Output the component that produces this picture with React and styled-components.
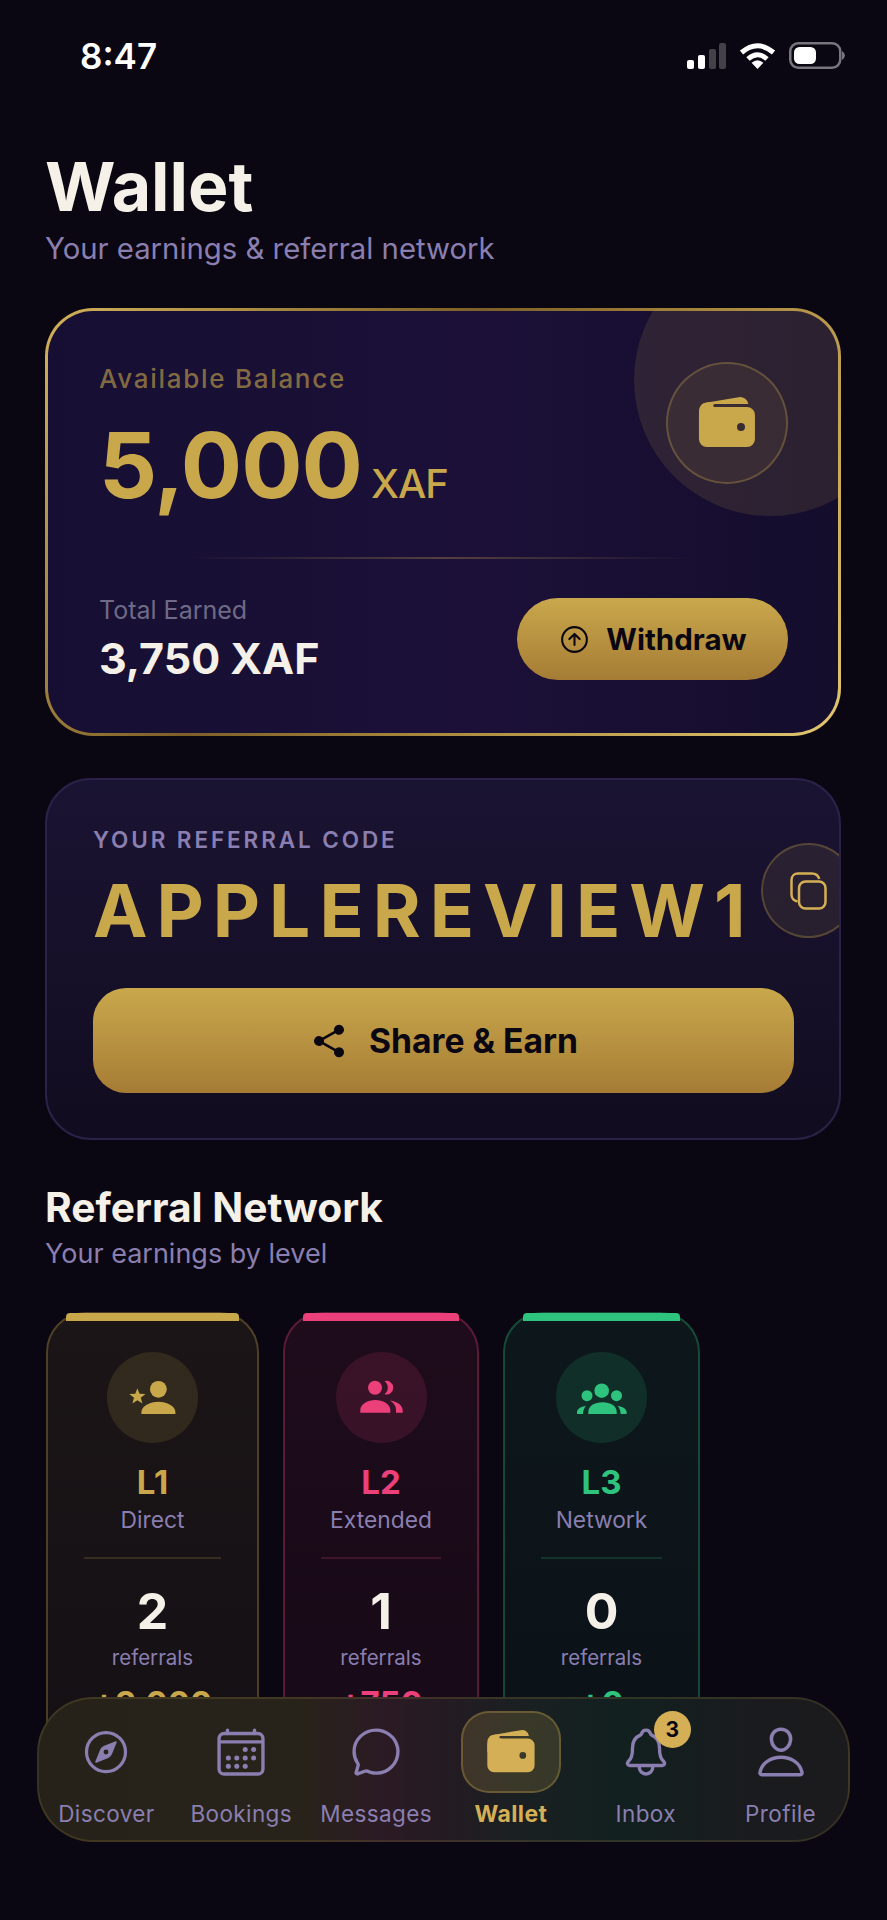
import React from "react";
import styled, { createGlobalStyle } from "styled-components";
import {
  IoCompassOutline,
  IoCalendarOutline,
  IoChatbubbleOutline,
  IoWallet,
  IoNotificationsOutline,
  IoPersonOutline,
  IoShareSocial,
  IoArrowUpCircleOutline,
} from "react-icons/io5";

const GOLD = "#c9a84c";
const MUTED = "#8a7fb0";

const Global = createGlobalStyle`
  * { box-sizing: border-box; }
  html, body { margin: 0; padding: 0; background: #0a0712; }
  body { font-family: Inter, "Noto Sans", sans-serif; }
`;

const Screen = styled.div`
  position: relative;
  width: 887px;
  height: 1920px;
  overflow: hidden;
  background: #0a0712;
`;

const Scroll = styled.div`
  height: 1800px;
  overflow: hidden;
`;

const StatusBar = styled.div`
  display: flex;
  justify-content: space-between;
  align-items: flex-start;
  height: 145px;
  padding: 36px 42px 0 80px;
`;

const Clock = styled.span`
  font-size: 35px;
  line-height: 40px;
  font-weight: 600;
  color: #fff;
`;

const StatusIcons = styled.div`
  display: flex;
  align-items: center;
  gap: 13px;
  padding-top: 6px;
`;

const Content = styled.main`
  padding: 0 46px 0 45px;
`;

const Title = styled.h1`
  margin: 0;
  font-size: 68px;
  line-height: 82px;
  font-weight: 700;
  color: #f5f0e8;
`;

const Subtitle = styled.p`
  margin: 4px 0 0;
  font-size: 29.3px;
  line-height: 36px;
  font-weight: 400;
  color: ${MUTED};
`;

const BalanceCard = styled.section`
  position: relative;
  margin-top: 41px;
  height: 428px;
  padding: 51px 50px 53px 51px;
  border: 3px solid transparent;
  border-radius: 48px;
  background:
    linear-gradient(90deg, #160f33, #1c1038 55%, #140d2c) padding-box,
    linear-gradient(125deg, #d2b25a 0%, #7d5f28 40%, #a5853c 60%, #e2c671 100%) border-box;
  overflow: hidden;
`;

const Glow = styled.div`
  position: absolute;
  top: -67px;
  right: -68px;
  width: 272px;
  height: 272px;
  border-radius: 50%;
  background: rgba(201, 168, 76, 0.13);
`;

const BalanceTop = styled.div`
  position: relative;
  display: flex;
  justify-content: space-between;
  align-items: flex-start;
  height: 153px;
`;

const BalanceLabel = styled.div`
  padding-top: 1px;
  font-size: 26px;
  line-height: 32px;
  font-weight: 500;
  letter-spacing: 1.7px;
  color: rgba(201, 168, 76, 0.62);
`;

const Amount = styled.div`
  display: flex;
  align-items: baseline;
  gap: 9px;
  margin-top: 20px;
`;

const AmountValue = styled.span`
  font-size: 91px;
  line-height: 100px;
  font-weight: 700;
  letter-spacing: -1px;
  color: ${GOLD};
`;

const AmountUnit = styled.span`
  font-size: 40px;
  font-weight: 500;
  letter-spacing: -1px;
  color: ${GOLD};
`;

const WalletBadge = styled.div`
  display: flex;
  align-items: center;
  justify-content: center;
  width: 122px;
  height: 122px;
  border-radius: 50%;
  border: 2px solid rgba(201, 168, 76, 0.3);
  background: rgba(201, 168, 76, 0.08);
  color: ${GOLD};
`;

const FadeLine = styled.div`
  height: 2px;
  margin: 42px 0 39px;
  background: linear-gradient(90deg, transparent 13%, rgba(201, 168, 76, 0.32) 50%, transparent 87%);
`;

const BalanceBottom = styled.div`
  display: flex;
  justify-content: space-between;
  align-items: center;
  height: 82px;
`;

const EarnedLabel = styled.div`
  font-size: 25px;
  line-height: 30px;
  color: #6f6a85;
`;

const EarnedValue = styled.div`
  margin-top: 7px;
  font-size: 43px;
  line-height: 52px;
  font-weight: 700;
  color: #f5f0e8;
`;

const GoldButton = styled.button`
  display: flex;
  align-items: center;
  justify-content: center;
  border: 0;
  font-family: inherit;
  font-weight: 700;
  color: #0a0712;
  background: linear-gradient(180deg, #c9a84c, #a67c35);
`;

const WithdrawButton = styled(GoldButton)`
  width: 271px;
  height: 82px;
  gap: 15px;
  border-radius: 41px;
  font-size: 29.5px;
`;

const ReferralCard = styled.section`
  margin-top: 42px;
  height: 362px;
  padding: 46px 46px 45px;
  border: 2px solid #2a2248;
  border-radius: 46px;
  background: linear-gradient(180deg, #1a1433, #120c20);
  overflow: hidden;
`;

const CodeRow = styled.div`
  display: flex;
  align-items: center;
  gap: 6px;
`;

const CodeColumn = styled.div`
  flex-shrink: 0;
`;

const CodeLabel = styled.div`
  font-size: 22.5px;
  line-height: 28px;
  font-weight: 600;
  letter-spacing: 2.9px;
  color: ${MUTED};
`;

const Code = styled.div`
  margin-top: 13px;
  font-size: 73px;
  line-height: 88px;
  font-weight: 700;
  letter-spacing: 9px;
  white-space: nowrap;
  color: ${GOLD};
`;

const CopyButton = styled.button`
  display: flex;
  align-items: center;
  justify-content: center;
  flex-shrink: 0;
  width: 95px;
  height: 95px;
  padding: 0;
  border-radius: 50%;
  border: 2px solid rgba(201, 168, 76, 0.28);
  background: rgba(201, 168, 76, 0.1);
  color: #d4af55;
`;

const ShareButton = styled(GoldButton)`
  width: 701px;
  height: 105px;
  margin-top: 33px;
  gap: 20px;
  border-radius: 33px;
  font-size: 33.7px;
`;

const SectionTitle = styled.h2`
  margin: 44px 0 0;
  font-size: 40.7px;
  line-height: 48px;
  font-weight: 700;
  color: #f5f0e8;
`;

const SectionSub = styled.p`
  margin: 5px 0 0;
  font-size: 27px;
  line-height: 34px;
  color: ${MUTED};
`;

const LevelRow = styled.div`
  display: flex;
  gap: 24px;
  margin: 41px 0 0 1px;
`;

const LevelCard = styled.article`
  position: relative;
  display: flex;
  flex-direction: column;
  align-items: center;
  flex-shrink: 0;
  width: ${(p) => p.$width}px;
  height: 560px;
  padding: 38px 36px 0;
  border: 2px solid rgba(${(p) => p.$rgb}, 0.3);
  border-radius: 40px;
  background: linear-gradient(180deg, rgba(${(p) => p.$rgb}, 0.09), rgba(${(p) => p.$rgb}, 0.05));
`;

const TopBar = styled.div`
  position: absolute;
  top: -1px;
  left: 18px;
  right: 18px;
  height: 8px;
  border-radius: 4px 4px 0 0;
  background: rgb(${(p) => p.$rgb});
`;

const LevelIcon = styled.div`
  width: 91px;
  height: 91px;
  border-radius: 50%;
  background: rgba(${(p) => p.$rgb}, 0.14);
  color: rgb(${(p) => p.$rgb});
  line-height: 0;
`;

const LevelName = styled.div`
  margin-top: 19px;
  font-size: 33px;
  line-height: 40px;
  font-weight: 700;
  color: rgb(${(p) => p.$rgb});
`;

const LevelKind = styled.div`
  margin-top: 3px;
  font-size: 22.8px;
  line-height: 30px;
  color: ${MUTED};
`;

const LevelLine = styled.div`
  align-self: stretch;
  height: 2px;
  margin-top: 22px;
  background: rgba(${(p) => p.$rgb}, 0.18);
`;

const LevelCount = styled.div`
  margin-top: 22px;
  font-size: 50px;
  line-height: 60px;
  font-weight: 700;
  color: #f5f0e8;
`;

const LevelUnit = styled.div`
  margin-top: 4px;
  font-size: 20.5px;
  line-height: 26px;
  color: ${MUTED};
`;

const LevelEarned = styled.div`
  margin-top: 12px;
  font-size: 33px;
  line-height: 40px;
  font-weight: 700;
  white-space: nowrap;
  color: rgb(${(p) => p.$rgb});
`;

const TabBar = styled.nav`
  position: absolute;
  left: 37px;
  right: 37px;
  bottom: 78px;
  height: 145px;
  display: flex;
  padding-top: 12px;
  border: 2px solid rgba(201, 168, 76, 0.16);
  border-radius: 56px;
  background: linear-gradient(
    90deg,
    #26221a 0%,
    #28231a 32%,
    #2b1a24 43%,
    #241b22 50%,
    #1a2022 60%,
    #122020 72%,
    #1a1b1e 88%,
    #1b1b1d 100%
  );
`;

const Tab = styled.div`
  flex: 1;
  display: flex;
  flex-direction: column;
  align-items: center;
  color: ${(p) => (p.$active ? "#d4af55" : MUTED)};
`;

const TabIcon = styled.div`
  position: relative;
  display: flex;
  align-items: center;
  justify-content: center;
  width: 100px;
  height: 82px;
  border-radius: 28px;
  border: 2px solid ${(p) => (p.$active ? "rgba(201,168,76,0.32)" : "transparent")};
  background: ${(p) => (p.$active ? "rgba(201,168,76,0.18)" : "transparent")};
`;

const TabLabel = styled.span`
  margin-top: 7px;
  font-size: ${(p) => (p.$active ? 23 : 22.5)}px;
  line-height: 28px;
  letter-spacing: 0.4px;
  font-weight: ${(p) => (p.$active ? 700 : 400)};
`;

const Badge = styled.span`
  position: absolute;
  top: -2px;
  right: 3px;
  display: flex;
  align-items: center;
  justify-content: center;
  width: 37px;
  height: 37px;
  border-radius: 50%;
  background: #d4af55;
  color: #0a0712;
  font-size: 21px;
  font-weight: 700;
`;

const SignalIcon = () => (
  <svg width="39" height="26" viewBox="0 0 39 26">
    <rect x="0" y="17" width="7" height="9" rx="2" fill="#fff" />
    <rect x="11" y="12" width="7" height="14" rx="2" fill="#fff" />
    <rect x="22" y="6" width="7" height="20" rx="2" fill="#444248" />
    <rect x="32" y="0" width="7" height="26" rx="2" fill="#444248" />
  </svg>
);

const WifiIcon = () => (
  <svg width="37" height="27" viewBox="0 0 37 27" fill="none" stroke="#fff" strokeWidth="5">
    <path d="M2.5 10.5 Q18.5 -3 34.5 10.5" />
    <path d="M9 17 Q18.5 8.5 28 17" />
    <path d="M12.6 20.8 Q18.5 15.5 24.4 20.8 L18.5 27 Z" fill="#fff" stroke="none" />
  </svg>
);

const BatteryIcon = () => (
  <svg width="56" height="27" viewBox="0 0 56 27">
    <rect x="1.25" y="1.25" width="50" height="24.5" rx="8" fill="none" stroke="#77767c" strokeWidth="2.5" />
    <rect x="5" y="5" width="22" height="17" rx="5.5" fill="#fff" />
    <path d="M53 9 Q56 11 56 13.5 Q56 16 53 18 Z" fill="#77767c" />
  </svg>
);

const CopyIcon = () => (
  <svg width="37" height="38" viewBox="0 0 37 38" fill="none" stroke="currentColor" strokeWidth="2.5">
    <rect x="9" y="9.5" width="26.5" height="27" rx="6.5" />
    <path d="M7.5 29.5 C3.8 28.5 1.5 26 1.5 22.5 V8 C1.5 4.2 4.2 1.5 8 1.5 H22 C25.5 1.5 28.2 3.5 29.2 7" />
  </svg>
);

const DirectGlyph = () => (
  <svg width="91" height="91" viewBox="0 0 91 91" fill="currentColor">
    <circle cx="51.4" cy="37.3" r="8.4" />
    <path d="M34.4 62 V60 C34.4 54 43 49.7 51.4 49.7 C59.8 49.7 68.4 54 68.4 60 V62 Z" />
    <polygon points="30.4,36.2 32.5,41.8 38.5,42.1 33.8,45.8 35.4,51.6 30.4,48.3 25.4,51.6 27,45.8 22.3,42.1 28.3,41.8" />
  </svg>
);

const ExtendedGlyph = () => (
  <svg width="91" height="91" viewBox="0 0 91 91" fill="currentColor">
    <circle cx="39" cy="35.7" r="7" />
    <path d="M48.5 29.2 A6.8 6.8 0 1 1 48.5 42.2 A8 8 0 0 0 48.5 29.2 Z" />
    <path d="M24.3 60.7 V58 C24.3 52 32 48 39.3 48 C46.6 48 54.3 52 54.3 58 V60.7 Z" />
    <path d="M54 48.5 C61 49.5 66.7 53 66.7 58.5 V60.7 H60 V58 C60 54 58 51 54 48.5 Z" />
  </svg>
);

const NetworkGlyph = () => (
  <svg width="91" height="91" viewBox="0 0 91 91" fill="currentColor">
    <circle cx="45.7" cy="38.7" r="7.3" />
    <circle cx="31" cy="43.7" r="5.5" />
    <circle cx="60.5" cy="43.7" r="5.5" />
    <path d="M32.3 62 V60 C32.3 54 38.5 50.3 46.5 50.3 C54.5 50.3 60.7 54 60.7 60 V62 Z" />
    <path d="M21 62 V60 C21 57 25 54.5 30 53.7 C28 56 27 59 27 62 Z" />
    <path d="M70.6 62 V60 C70.6 57 66.6 54.5 61.6 53.7 C63.6 56 64.6 59 64.6 62 Z" />
  </svg>
);

const levels = [
  { name: "L1", kind: "Direct", count: 2, earned: "+3,000", rgb: "201,168,76", width: 213, Glyph: DirectGlyph },
  { name: "L2", kind: "Extended", count: 1, earned: "+750", rgb: "236,64,122", width: 196, Glyph: ExtendedGlyph },
  { name: "L3", kind: "Network", count: 0, earned: "+0", rgb: "46,196,125", width: 197, Glyph: NetworkGlyph },
];

const tabs = [
  { label: "Discover", Icon: IoCompassOutline, size: 52 },
  { label: "Bookings", Icon: IoCalendarOutline, size: 54 },
  { label: "Messages", Icon: IoChatbubbleOutline, size: 54 },
  { label: "Wallet", Icon: IoWallet, size: 54, active: true },
  { label: "Inbox", Icon: IoNotificationsOutline, size: 54, badge: 3 },
  { label: "Profile", Icon: IoPersonOutline, size: 56 },
];

export default function App() {
  return (
    <Screen>
      <Global />
      <Scroll>
        <StatusBar>
          <Clock>8:47</Clock>
          <StatusIcons>
            <SignalIcon />
            <WifiIcon />
            <BatteryIcon />
          </StatusIcons>
        </StatusBar>
        <Content>
          <Title>Wallet</Title>
          <Subtitle>Your earnings &amp; referral network</Subtitle>

          <BalanceCard>
            <Glow />
            <BalanceTop>
              <div>
                <BalanceLabel>Available Balance</BalanceLabel>
                <Amount>
                  <AmountValue>5,000</AmountValue>
                  <AmountUnit>XAF</AmountUnit>
                </Amount>
              </div>
              <WalletBadge>
                <IoWallet size={64} />
              </WalletBadge>
            </BalanceTop>
            <FadeLine />
            <BalanceBottom>
              <div>
                <EarnedLabel>Total Earned</EarnedLabel>
                <EarnedValue>3,750 XAF</EarnedValue>
              </div>
              <WithdrawButton>
                <IoArrowUpCircleOutline size={33} />
                Withdraw
              </WithdrawButton>
            </BalanceBottom>
          </BalanceCard>

          <ReferralCard>
            <CodeRow>
              <CodeColumn>
                <CodeLabel>YOUR REFERRAL CODE</CodeLabel>
                <Code>APPLEREVIEW1</Code>
              </CodeColumn>
              <CopyButton>
                <CopyIcon />
              </CopyButton>
            </CodeRow>
            <ShareButton>
              <IoShareSocial size={40} />
              Share &amp; Earn
            </ShareButton>
          </ReferralCard>

          <SectionTitle>Referral Network</SectionTitle>
          <SectionSub>Your earnings by level</SectionSub>

          <LevelRow>
            {levels.map(({ name, kind, count, earned, rgb, width, Glyph }) => (
              <LevelCard key={name} $rgb={rgb} $width={width}>
                <TopBar $rgb={rgb} />
                <LevelIcon $rgb={rgb}>
                  <Glyph />
                </LevelIcon>
                <LevelName $rgb={rgb}>{name}</LevelName>
                <LevelKind>{kind}</LevelKind>
                <LevelLine $rgb={rgb} />
                <LevelCount>{count}</LevelCount>
                <LevelUnit>referrals</LevelUnit>
                <LevelEarned $rgb={rgb}>{earned}</LevelEarned>
              </LevelCard>
            ))}
          </LevelRow>
        </Content>
      </Scroll>

      <TabBar>
        {tabs.map(({ label, Icon, size, active, badge }) => (
          <Tab key={label} $active={active}>
            <TabIcon $active={active}>
              <Icon size={size} />
              {badge ? <Badge>{badge}</Badge> : null}
            </TabIcon>
            <TabLabel $active={active}>{label}</TabLabel>
          </Tab>
        ))}
      </TabBar>
    </Screen>
  );
}
